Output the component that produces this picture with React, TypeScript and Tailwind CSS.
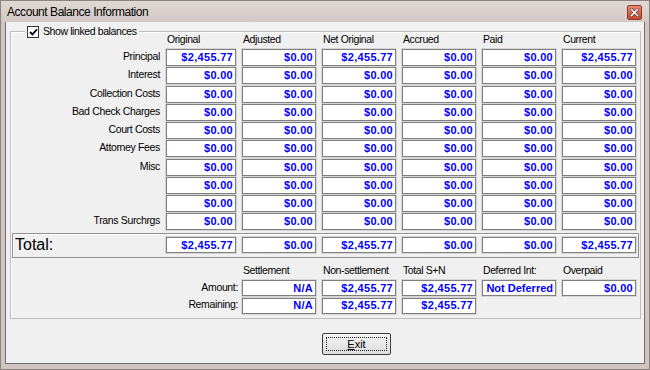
const LABELS = [
  "Principal",
  "Interest",
  "Collection Costs",
  "Bad Check Charges",
  "Court Costs",
  "Attorney Fees",
  "Misc",
  "",
  "",
  "Trans Surchrgs",
];

const HEADERS = ["Original", "Adjusted", "Net Original", "Accrued", "Paid", "Current"];
const TOTALS = ["$2,455.77", "$0.00", "$2,455.77", "$0.00", "$0.00", "$2,455.77"];
const ZEROS = ["$0.00", "$0.00", "$0.00", "$0.00", "$0.00", "$0.00"];

function Field({ v, tight }: { v: string; tight?: boolean }) {
  return (
    <div
      className={`h-full bg-white border border-[#7f7f7f] shadow-[0_0_0_1px_#d6d6d6] flex items-center justify-end pr-[2px] text-[11px] font-bold text-[#0000ff] leading-none whitespace-nowrap overflow-hidden ${
        tight ? "tracking-[0px]" : "tracking-[0.3px]"
      }`}
    >
      {v}
    </div>
  );
}

function Label({ children }: { children: React.ReactNode }) {
  return (
    <div className="h-full flex items-center justify-end pb-[1px] text-[10.5px] tracking-[-0.35px] text-black whitespace-nowrap">
      {children}
    </div>
  );
}

function Head({ children }: { children: React.ReactNode }) {
  return (
    <div className="pl-[1px] text-[10.5px] tracking-[-0.4px] leading-[14px] text-black whitespace-nowrap">
      {children}
    </div>
  );
}

export default function App() {
  return (
    <div className="w-[650px] h-[370px] flex flex-col bg-[#cfc4bf] border border-[#8e837f] font-['Liberation_Sans',Arial,sans-serif] select-none">
      {/* title bar */}
      <div className="h-[21px] flex items-center justify-between pl-[6px] pr-[7px] bg-gradient-to-b from-[#e0d8d4] to-[#d3c9c4]">
        <span className="text-[12px] tracking-[-0.45px] text-black">Account Balance Information</span>
        <div className="w-[15px] h-[15px] mt-[2px] rounded-[2px] border border-[#8a3b2c] bg-gradient-to-b from-[#e98a70] to-[#c4452c] flex items-center justify-center">
          <svg width="9" height="9" viewBox="0 0 9 9">
            <path d="M1.5 1.5L7.5 7.5M7.5 1.5L1.5 7.5" stroke="#5a2a22" strokeWidth="3" strokeLinecap="square" />
            <path d="M1.5 1.5L7.5 7.5M7.5 1.5L1.5 7.5" stroke="#ffffff" strokeWidth="1.6" strokeLinecap="square" />
          </svg>
        </div>
      </div>

      <div className="flex-1 flex px-[4px] pb-[5px]">
        <div className="flex-1 flex flex-col bg-[#f0f0f0] border-x border-b border-[#6f6f6f]">
          {/* group box */}
          <div className="relative ml-[4px] mr-[3px] mt-[9px] border border-[#bdbdbd] shadow-[inset_1px_1px_0_#ffffff] pb-[4px]">
            <div className="absolute left-[14px] top-[-7px] h-[14px] flex items-center gap-[4px] bg-[#f0f0f0] px-[2px]">
              <div className="w-[12px] h-[12px] bg-white border border-[#333333] flex items-center justify-center">
                <svg width="9" height="8" viewBox="0 0 9 8">
                  <path d="M1 4L3.4 6.4L8 1.4" stroke="#000" strokeWidth="1.8" fill="none" />
                </svg>
              </div>
              <span className="text-[10.5px] tracking-[-0.4px] text-black">Show linked balances</span>
            </div>

            {/* column headers */}
            <div className="grid grid-cols-[149px_70px_repeat(5,74px)] gap-x-[6px] h-[14px]">
              <div />
              {HEADERS.map((h) => (
                <Head key={h}>{h}</Head>
              ))}
            </div>

            {/* balance rows */}
            <div className="mt-[3px] grid grid-cols-[149px_70px_repeat(5,74px)] gap-x-[6px] gap-y-[1.25px] auto-rows-[17px]">
              {LABELS.map((l, i) => (
                <div key={i} className="contents">
                  <Label>{l}</Label>
                  {(i === 0 ? TOTALS : ZEROS).map((v, j) => (
                    <Field key={j} v={v} />
                  ))}
                </div>
              ))}
            </div>

            {/* total */}
            <div className="mt-[3px] mx-[1px] border border-[#8f8f8f] shadow-[inset_1px_1px_0_#ffffff] pt-[3px] pb-[4px] grid grid-cols-[147px_70px_repeat(5,74px)] gap-x-[6px] h-[25px] box-border">
              <div className="pl-[2px] flex items-center text-[16px] leading-none text-black">Total:</div>
              {TOTALS.map((v, j) => (
                <Field key={j} v={v} />
              ))}
            </div>

            {/* settlement section */}
            <div className="mt-[5px] grid grid-cols-[149px_70px_repeat(5,74px)] gap-x-[6px] h-[14px]">
              <div className="col-span-2" />
              <Head>Settlement</Head>
              <Head>Non-settlement</Head>
              <Head>Total S+N</Head>
              <Head>Deferred Int:</Head>
              <Head>Overpaid</Head>
            </div>
            <div className="mt-[3px] grid grid-cols-[149px_70px_repeat(5,74px)] gap-x-[6px] gap-y-[1.5px] auto-rows-[16px]">
              <div className="col-span-2 -mr-[2px]">
                <Label>Amount:</Label>
              </div>
              <Field v="N/A" />
              <Field v="$2,455.77" />
              <Field v="$2,455.77" />
              <Field v="Not Deferred" tight />
              <Field v="$0.00" />
              <div className="col-span-2 -mr-[2px]">
                <Label>Remaining:</Label>
              </div>
              <Field v="N/A" />
              <Field v="$2,455.77" />
              <Field v="$2,455.77" />
            </div>
          </div>

          {/* exit button */}
          <div className="mt-[12px] ml-[316px]">
            <button className="w-[69px] h-[22px] rounded-[2px] border border-[#3d3d3d] bg-gradient-to-b from-[#f4f4f4] to-[#dddddd] p-[3px]">
              <div className="w-full h-full border border-dotted border-[#222222] flex items-center justify-center text-[11px] text-black leading-none">
                <span className="underline underline-offset-[1px]">E</span>xit
              </div>
            </button>
          </div>
        </div>
      </div>
    </div>
  );
}
